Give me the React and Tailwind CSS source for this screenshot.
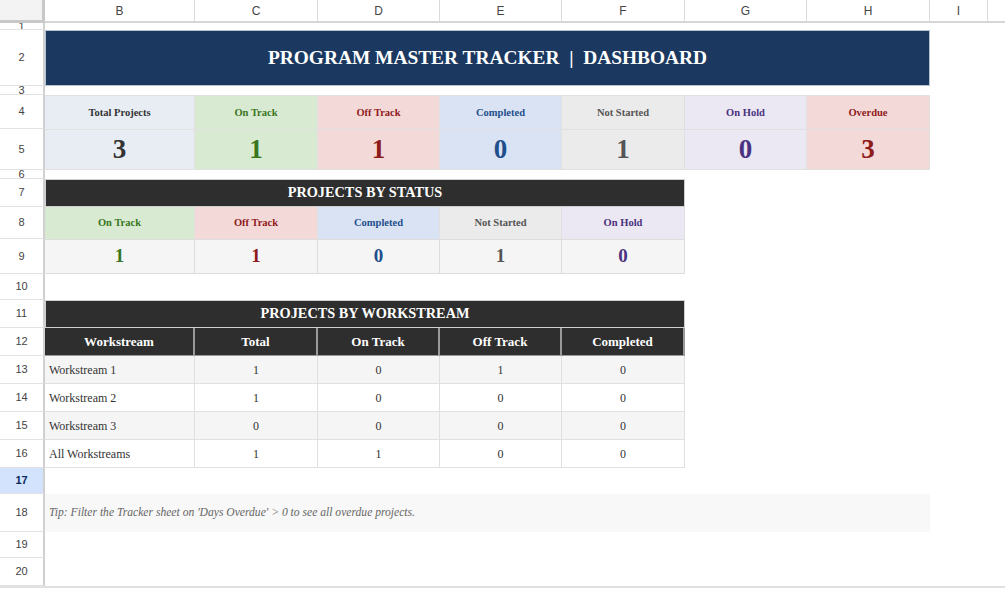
import React from "react";

// column widths B..H (I and the rest are filler)
const W = ["w-[150px]", "w-[123px]", "w-[122px]", "w-[122px]", "w-[123px]", "w-[122px]", "w-[123px]"];

const summary = [
  { label: "Total Projects", value: 3, bg: "bg-[#e8edf4]", fg: "text-[#333333]" },
  { label: "On Track", value: 1, bg: "bg-[#d9ead3]", fg: "text-[#38761d]" },
  { label: "Off Track", value: 1, bg: "bg-[#f4d9d9]", fg: "text-[#8e1b1b]" },
  { label: "Completed", value: 0, bg: "bg-[#dae3f3]", fg: "text-[#1f4e8c]" },
  { label: "Not Started", value: 1, bg: "bg-[#ebebeb]", fg: "text-[#555555]" },
  { label: "On Hold", value: 0, bg: "bg-[#ebe7f3]", fg: "text-[#4a3280]" },
  { label: "Overdue", value: 3, bg: "bg-[#f4d9d9]", fg: "text-[#8e1b1b]" },
];

const byStatus = summary.slice(1, 6);

const workstreams = [
  ["Workstream 1", 1, 0, 1, 0],
  ["Workstream 2", 1, 0, 0, 0],
  ["Workstream 3", 0, 0, 0, 0],
  ["All Workstreams", 1, 1, 0, 0],
];

const Row = ({ n, h, selected, children }) => (
  <div className={`flex ${h}`}>
    <div
      className={`w-[45px] shrink-0 border-r-2 border-r-[#d0d0d0] border-b border-b-[#e2e2e2] flex items-center justify-center overflow-hidden text-[11px] leading-none font-['Liberation_Sans',Arial,sans-serif] ${
        selected ? "bg-[#d3e3fd] text-[#0b2a5e] font-bold" : "text-[#444444]"
      }`}
    >
      {n}
    </div>
    <div className="flex min-w-0">{children}</div>
  </div>
);

export default function App() {
  const cols = ["B", "C", "D", "E", "F", "G", "H", "I"];
  const colW = [...W, "w-[58px]"];

  return (
    <div className="w-[1005px] h-[589px] overflow-hidden bg-white font-['Liberation_Sans',Arial,sans-serif]">
      {/* column headers */}
      <div className="flex h-[23px]">
        <div className="w-[45px] shrink-0 bg-[#f3f3f3] border-r-[3px] border-b-[3px] border-[#c8c8c8]" />
        {cols.map((c, i) => (
          <div
            key={c}
            className={`${colW[i]} shrink-0 border-r border-r-[#dadada] border-b-2 border-b-[#d6d6d6] flex items-center justify-center text-[12px] text-[#444444]`}
          >
            {c}
          </div>
        ))}
        <div className="flex-1 border-b-2 border-b-[#d6d6d6]" />
      </div>

      <div className="font-['Liberation_Serif','Times_New_Roman',serif]">
        <Row n="1" h="h-[7px]" />
        <Row n="2" h="h-[56px]">
          <div className="w-[885px] h-full bg-[#1b3960] border border-[#b8c3d2] flex items-center justify-center text-white font-bold text-[19.4px] whitespace-pre">
            PROGRAM MASTER TRACKER  |  DASHBOARD
          </div>
        </Row>
        <Row n="3" h="h-[9px]" />
        <Row n="4" h="h-[34px]">
          {summary.map((s, i) => (
            <div
              key={s.label}
              className={`${W[i]} h-full ${s.bg} ${s.fg} border-t border-r border-[#e0e0e0] flex items-center justify-center text-[10.5px] font-bold`}
            >
              {s.label}
            </div>
          ))}
        </Row>
        <Row n="5" h="h-[41px]">
          {summary.map((s, i) => (
            <div
              key={s.label}
              className={`${W[i]} h-full ${s.bg} ${s.fg} border-t border-r border-b border-[#e0e0e0] flex items-center justify-center text-[27px] font-bold`}
            >
              {s.value}
            </div>
          ))}
        </Row>
        <Row n="6" h="h-[9px]" />
        <Row n="7" h="h-[28px]">
          <div className="w-[640px] h-full bg-[#2e2e2e] border border-[#cfcfcf] flex items-center justify-center text-white font-bold text-[14.3px]">
            PROJECTS BY STATUS
          </div>
        </Row>
        <Row n="8" h="h-[32px]">
          {byStatus.map((s, i) => (
            <div
              key={s.label}
              className={`${W[i]} h-full ${s.bg} ${s.fg} border-r border-[#e0e0e0] flex items-center justify-center text-[10.5px] font-bold`}
            >
              {s.label}
            </div>
          ))}
        </Row>
        <Row n="9" h="h-[35px]">
          {byStatus.map((s, i) => (
            <div
              key={s.label}
              className={`${W[i]} h-full bg-[#f5f5f5] ${s.fg} border-t border-r border-b border-[#dddddd] flex items-center justify-center text-[19px] font-bold`}
            >
              {s.value}
            </div>
          ))}
        </Row>
        <Row n="10" h="h-[26px]" />
        <Row n="11" h="h-[28px]">
          <div className="w-[640px] h-full bg-[#2e2e2e] border border-[#cfcfcf] flex items-center justify-center text-white font-bold text-[14.3px]">
            PROJECTS BY WORKSTREAM
          </div>
        </Row>
        <Row n="12" h="h-[28px]">
          {["Workstream", "Total", "On Track", "Off Track", "Completed"].map((t, i) => (
            <div
              key={t}
              className={`${W[i]} h-full bg-[#2e2e2e] border-r-2 border-b border-[#9a9a9a] flex items-center justify-center text-white font-bold text-[13px]`}
            >
              {t}
            </div>
          ))}
        </Row>
        {workstreams.map((r, ri) => (
          <Row key={r[0]} n={String(13 + ri)} h="h-[28px]">
            {r.map((v, i) => (
              <div
                key={i}
                className={`${W[i]} h-full ${ri % 2 === 0 ? "bg-[#f5f5f5]" : "bg-white"} border-r border-b border-[#e0e0e0] flex items-center text-[12px] text-[#333333] ${
                  i === 0 ? "pl-[4px]" : "justify-center"
                }`}
              >
                {v}
              </div>
            ))}
          </Row>
        ))}
        <Row n="17" h="h-[26px]" selected />
        <Row n="18" h="h-[38px]">
          <div className="w-[885px] h-full bg-[#f8f8f8] flex items-center pl-[4px] italic text-[11.6px] text-[#666666]">
            Tip: Filter the Tracker sheet on 'Days Overdue' &gt; 0 to see all overdue projects.
          </div>
        </Row>
        <Row n="19" h="h-[26px]" />
        <Row n="20" h="h-[28px]" />
        <div className="h-[10px] border-t-2 border-[#e0e0e0]" />
      </div>
    </div>
  );
}
